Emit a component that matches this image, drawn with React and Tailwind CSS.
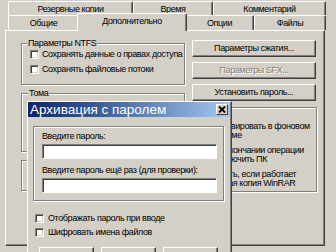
import React from "react";

const FONT = "font-['Liberation_Sans',Arial,sans-serif] text-[9px] leading-[11px] tracking-[-0.4px]";

function Tab({ w, children, top = false }) {
  return (
    <div
      className={`${w} h-full flex items-center justify-center whitespace-nowrap border-t border-l border-white border-r border-r-[#404040] rounded-t-[2px] shadow-[inset_-1px_0_0_#808080] ${top ? "pt-[2px]" : ""}`}
    >
      {children}
    </div>
  );
}

function Box() {
  return (
    <span className="w-[9px] h-[9px] shrink-0 bg-white border border-t-[#808080] border-l-[#808080] border-b-white border-r-white shadow-[inset_1px_1px_0_#404040,inset_-1px_-1px_0_#d4d0c8]" />
  );
}

function Check({ children, className = "" }) {
  return (
    <div className={`flex items-center whitespace-nowrap shrink-0 ${className}`}>
      <Box />
      <span>{children}</span>
    </div>
  );
}

function Btn({ children, disabled = false, className = "" }) {
  return (
    <div
      className={`flex shrink-0 items-center justify-center whitespace-nowrap border border-t-white border-l-white border-r-[#404040] border-b-[#404040] shadow-[inset_-1px_-1px_0_#808080] ${
        disabled ? "text-[#808080] [text-shadow:1px_1px_0_#fff]" : ""
      } ${className}`}
    >
      {children}
    </div>
  );
}

const ETCH = "border border-[#808080] shadow-[inset_1px_1px_0_#fff,1px_1px_0_#fff]";

export default function App() {
  return (
    <div className={`relative w-[336px] h-[252px] overflow-hidden bg-[#d4d0c8] text-black ${FONT}`}>
      {/* tab row 1 */}
      <div className="flex ml-[8px] mt-[1px] h-[14px]">
        <Tab w="w-[125px]" top>Резервные копии</Tab>
        <Tab w="w-[80px]" top>Время</Tab>
        <Tab w="w-[113px]" top>Комментарий</Tab>
      </div>
      {/* tab row 2 */}
      <div className="flex ml-[8px] h-[15px] items-end">
        <div className="w-[71px] h-[15px]">
          <Tab w="w-full">Общие</Tab>
        </div>
        <div className="relative z-10 w-[110px] h-[18px] -mx-[2px] -mb-[1px] bg-[#d4d0c8] flex items-center justify-center pb-[2px] border-t border-l border-white border-r border-r-[#404040] rounded-t-[2px] shadow-[inset_-1px_0_0_#808080]">
          Дополнительно
        </div>
        <div className="w-[69px] h-[15px]">
          <Tab w="w-full">Опции</Tab>
        </div>
        <div className="w-[72px] h-[15px]">
          <Tab w="w-full">Файлы</Tab>
        </div>
      </div>

      {/* panel */}
      <div className="ml-[5px] w-[320px] h-[216px] flex border-t border-l border-white border-r border-b border-r-[#404040] border-b-[#404040] shadow-[inset_-1px_-1px_0_#808080]">
        {/* left column */}
        <div className="ml-[15px] w-[164px] flex flex-col">
          <fieldset className={`mt-[7px] pb-[10px] shrink-0 ${ETCH}`}>
            <legend className="ml-[5px] px-[1px] bg-[#d4d0c8]">Параметры NTFS</legend>
            <div className="flex flex-col gap-[5px] pl-[8px]">
              <Check className="h-[10px] gap-[3px]">Сохранять данные о правах доступа</Check>
              <Check className="h-[10px] gap-[3px]">Сохранять файловые потоки</Check>
            </div>
          </fieldset>
          <fieldset className={`mt-[3px] h-[64px] shrink-0 ${ETCH}`}>
            <legend className="ml-[6px] px-[1px] bg-[#d4d0c8]">Тома</legend>
          </fieldset>
          <div className={`mt-[8px] h-[31px] shrink-0 ${ETCH}`} />
        </div>

        {/* right column */}
        <div className="ml-[7px] w-[125px] flex flex-col">
          <div className="mt-[9px] w-[124px] flex flex-col gap-[5px] shrink-0">
            <Btn className="h-[17px]">Параметры сжатия...</Btn>
            <Btn className="h-[17px]" disabled>Параметры SFX...</Btn>
            <Btn className="h-[17px]">Установить пароль...</Btn>
          </div>
          <fieldset className={`mt-[1px] h-[90px] shrink-0 ${ETCH}`}>
            <legend className="ml-[5px] px-[1px] bg-[#d4d0c8]">Прочее</legend>
            <div className="flex flex-col gap-[6px] pl-[6px] pt-[9px] leading-[9px]">
              <div className="flex gap-[4px]">
                <Box />
                <span>Архивировать в фоновом<br />режиме</span>
              </div>
              <div className="flex gap-[4px]">
                <Box />
                <span>По окончании операции<br />выключить ПК</span>
              </div>
              <div className="flex gap-[4px]">
                <Box />
                <span>Ждать, если работает<br />другая копия WinRAR</span>
              </div>
            </div>
          </fieldset>
        </div>
      </div>

      {/* password dialog */}
      <div className="absolute z-20 left-[27px] top-[101px] w-[205px] h-[175px] bg-[#d4d0c8] flex flex-col border-t border-l border-white border-r border-r-[#404040] shadow-[inset_-1px_0_0_#808080]">
        <div className="h-[15px] shrink-0 mr-[1px] flex items-center justify-between bg-linear-to-r from-[#0a246a] to-[#a6caf0] pl-[2px] pr-[2px]">
          <span className="text-white text-[13.5px] leading-[15px] tracking-normal whitespace-nowrap">
            Архивация с паролем
          </span>
          <div className="w-[12px] h-[11px] flex items-center justify-center bg-[#d4d0c8] border border-t-white border-l-white border-r-[#404040] border-b-[#404040]">
            <svg width="8" height="7" viewBox="0 0 8 7">
              <path d="M1 0.5 L7 6.5 M7 0.5 L1 6.5" stroke="#000" strokeWidth="1.8" />
            </svg>
          </div>
        </div>
        <div className="ml-[5px] mt-[9px] w-[191px] h-[75px] shrink-0 flex flex-col pl-[8px] pt-[4px] border border-[#808080] shadow-[inset_1px_1px_0_#fff,1px_1px_0_#fff]">
          <div className="whitespace-nowrap">Введите пароль:</div>
          <div className="mt-[2px] w-[175px] h-[15px] shrink-0 bg-white border border-t-[#808080] border-l-[#808080] border-b-white border-r-white shadow-[inset_1px_1px_0_#404040]" />
          <div className="mt-[6px] whitespace-nowrap">Введите пароль ещё раз (для проверки):</div>
          <div className="mt-[2px] w-[175px] h-[15px] shrink-0 bg-white border border-t-[#808080] border-l-[#808080] border-b-white border-r-white shadow-[inset_1px_1px_0_#404040]" />
        </div>
        <div className="ml-[7px] mt-[12px] flex flex-col gap-[3px] shrink-0">
          <Check className="h-[11px] gap-[4px]">Отображать пароль при вводе</Check>
          <Check className="h-[11px] gap-[4px]">Шифровать имена файлов</Check>
        </div>
        <div className="ml-[11px] mt-[9px] flex gap-[7px] shrink-0">
          <Btn className="w-[55px] h-[18px]" />
          <Btn className="w-[55px] h-[18px]" />
          <Btn className="w-[55px] h-[18px]" />
        </div>
      </div>
    </div>
  );
}
